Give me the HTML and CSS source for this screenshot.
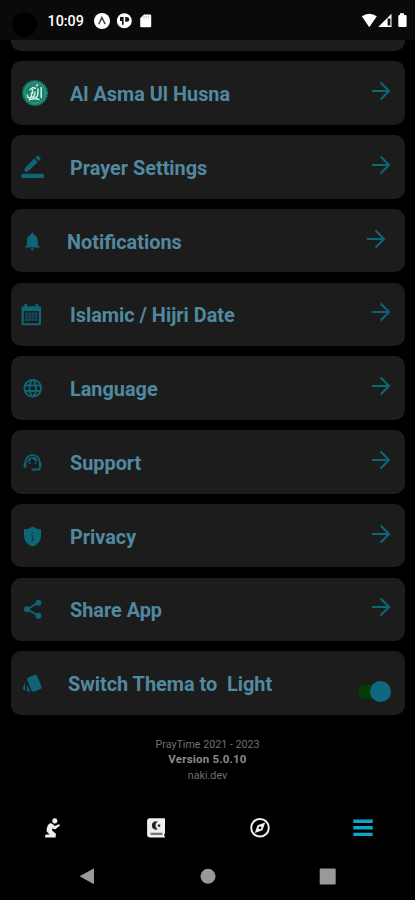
FILE: index.html
```html
<!DOCTYPE html>
<html lang="en">
<head>
<meta charset="utf-8">
<title>PrayTime</title>
<link rel="stylesheet" href="styles.css">
</head>
<body>
<svg width="0" height="0" class="defs"><symbol id="arrow" viewBox="0 0 20 20"><path d="M.8 10H17.6M9.6 1.6L18 10L9.6 18.4" fill="none" stroke="currentColor" stroke-width="2.1"/></symbol></svg>
<header class="status">
  <span class="camera"></span>
  <span class="clock">10:09</span>
  <svg class="status-left" viewBox="0 0 60 18"><circle cx="9" cy="9" r="8" fill="#fff"/><path d="M5.8 12.2L8.8 5.5L12.2 12.2M8.8 5.5L9.3 8" fill="none" stroke="#444" stroke-width="1.5"/><circle cx="31.3" cy="8.7" r="7.5" fill="#fff"/><path d="M27 5H30.6V12.8H29V9H27ZM32.2 5H34Q36.3 5.2 36.3 7.5Q36.3 9.7 33.8 9.8H32.2Z" fill="#111"/><path d="M51 2.5H57Q58.2 2.5 58.2 3.8V14Q58.2 15.3 57 15.3H48.4Q47.2 15.3 47.2 14V6.3Z" fill="#fff"/><path d="M51 4V6.3M53.2 4V6.3M55.4 4V6.3" stroke="#aaa" stroke-width=".8"/></svg>
  <svg class="status-right" viewBox="0 0 48 18"><path d="M.8 4.3Q8.3-.9 15.8 4.3L8.3 15.2Z" fill="#fff"/><path d="M17.2 15L30.5 1.8V15Z" fill="#fff"/><path d="M26.6 6.5H29.4V13.5H26.6Z" fill="#111"/><path d="M37.3 3H39V1.3H43V3H44.6Q45.6 3 45.6 4V14Q45.6 15 44.6 15H38.3Q37.3 15 37.3 14V4Q37.3 3 38.3 3Z" fill="#fff"/></svg>
</header>
<main class="list">
  <div class="card peek"></div>
  <div class="card"><svg class="icon" viewBox="0 0 32 32"><circle cx="19" cy="16" r="12.3" fill="#16806c"/><circle cx="19" cy="16" r="12.4" fill="none" stroke="#16806c" stroke-width="1.2" stroke-dasharray="1.7 1"/><circle cx="19" cy="16" r="10.3" fill="none" stroke="#4ba38e" stroke-width=".7"/><path d="M11.5 17.5Q11 21.5 14.3 20.7Q15.8 20 15.5 15.5M15.7 19.5Q18.7 22 19 14.5M19 20.5Q22.4 21.5 22 11.5M25.2 10V21M13.5 13L17 10.5L20 11.5M16.5 12V17M12.8 22.7L18 21.5L23.5 22.5M20 9L22 7.7" fill="none" stroke="#d9eee7" stroke-width="1.5"/></svg><span class="label">Al Asma Ul Husna</span><svg class="arrow"><use href="#arrow"/></svg></div>
  <div class="card"><svg class="icon" viewBox="0 0 32 32"><path d="M5.4 22.7H27.7V27H5.4ZM8.6 17.2L18.3 7.5L21.7 10.9L12 20.6H8.6ZM19.3 6.5L21 4.9Q21.7 4.3 22.4 4.9L24.3 6.8Q24.9 7.5 24.3 8.2L22.7 9.9Z"/></svg><span class="label">Prayer Settings</span><svg class="arrow"><use href="#arrow"/></svg></div>
  <div class="card inset"><svg class="icon" viewBox="0 0 32 32"><path transform="translate(5.6 5.5) scale(.9)" d="M12 22c1.1 0 2-.9 2-2h-4c0 1.1.9 2 2 2zm6-6v-5c0-3.07-1.63-5.64-4.5-6.32V4c0-.83-.67-1.5-1.5-1.5s-1.5.67-1.5 1.5v.68C7.64 5.36 6 7.92 6 11v5l-2 2v1h16v-1l-2-2z"/></svg><span class="label">Notifications</span><svg class="arrow"><use href="#arrow"/></svg></div>
  <div class="card"><svg class="icon" viewBox="0 0 32 32"><path fill-rule="evenodd" d="M7 8.3H8.4V6.8Q8.4 5.7 9.8 5.7Q11.2 5.7 11.2 6.8V8.3H19.5V6.8Q19.5 5.7 20.9 5.7Q22.3 5.7 22.3 6.8V8.3H23.5Q25 8.3 25 9.8V25.7Q25 27.3 23.5 27.3H7Q5.5 27.3 5.5 25.7V9.8Q5.5 8.3 7 8.3ZM7.8 13V25.2H22.7V13Z"/><path d="M9.3 14.5H21.3V23H9.3Z" opacity=".7"/><path d="M12.3 14V23M15.3 14V23M18.3 14V23M9 17.3H22M9 20.3H22" stroke="#1c2529" stroke-width=".7"/></svg><span class="label">Islamic / Hijri Date</span><svg class="arrow"><use href="#arrow"/></svg></div>
  <div class="card"><svg class="icon" viewBox="0 0 32 32"><path transform="translate(5.6 5.1) scale(.93)" d="M11.99 2C6.47 2 2 6.48 2 12s4.47 10 9.99 10C17.52 22 22 17.52 22 12S17.52 2 11.99 2zm6.93 6h-2.95c-.32-1.25-.78-2.45-1.38-3.56 1.84.63 3.37 1.91 4.33 3.56zM12 4.04c.83 1.2 1.48 2.53 1.91 3.96h-3.82c.43-1.43 1.08-2.76 1.91-3.96zM4.26 14C4.1 13.36 4 12.69 4 12s.1-1.36.26-2h3.38c-.08.66-.14 1.32-.14 2s.06 1.34.14 2H4.26zm.82 2h2.95c.32 1.25.78 2.45 1.38 3.56-1.84-.63-3.37-1.9-4.33-3.56zm2.95-8H5.08c.96-1.66 2.49-2.93 4.33-3.56C8.81 5.55 8.35 6.75 8.03 8zM12 19.96c-.83-1.2-1.48-2.53-1.91-3.96h3.82c-.43 1.43-1.08 2.76-1.91 3.96zM14.34 14H9.66c-.09-.66-.16-1.32-.16-2s.07-1.35.16-2h4.68c.09.65.16 1.32.16 2s-.07 1.34-.16 2zm.25 5.56c.6-1.11 1.06-2.31 1.38-3.56h2.95c-.96 1.65-2.49 2.93-4.33 3.56zM16.36 14c.08-.66.14-1.32.14-2s-.06-1.34-.14-2h3.38c.16.64.26 1.31.26 2s-.1 1.36-.26 2h-3.38z"/></svg><span class="label">Language</span><svg class="arrow"><use href="#arrow"/></svg></div>
  <div class="card"><svg class="icon" viewBox="0 0 32 32"><g transform="translate(5.8 5.5) scale(.9)"><path d="M21 12.22C21 6.73 16.74 3 12 3c-4.69 0-9 3.65-9 9.28-.6.34-1 .98-1 1.72v2c0 1.1.9 2 2 2h1v-6.1c0-3.87 3.13-7 7-7s7 3.13 7 7V19h-8v2h8c1.1 0 2-.9 2-2v-1.22c.59-.31 1-.92 1-1.64v-2.3c0-.7-.41-1.31-1-1.62z"/><circle cx="9" cy="13" r="1"/><circle cx="15" cy="13" r="1"/><path d="M18 11.03C17.52 8.18 15.04 6 12.05 6c-3.03 0-6.29 2.51-6.03 6.45 2.47-1.01 4.33-3.21 4.86-5.89 1.31 2.63 4 4.44 7.12 4.47z"/></g></svg><span class="label">Support</span><svg class="arrow"><use href="#arrow"/></svg></div>
  <div class="card"><svg class="icon" viewBox="0 0 32 32"><path d="M16.5 6.4Q20 9 25 9.3V15.5Q25 23.5 16.5 26.6Q8 23.5 8 15.5V9.3Q13 9 16.5 6.4Z"/><path d="M15.6 11.7H17.4V13.4H15.6ZM15 15.2H17.4V20H18.2V21H15V20H15.9V16.2H15Z" fill="#153c46"/></svg><span class="label">Privacy</span><svg class="arrow"><use href="#arrow"/></svg></div>
  <div class="card"><svg class="icon" viewBox="0 0 32 32"><path d="M22.5 9.8L11 16.3L22.5 22.8" fill="none" stroke="currentColor" stroke-width="1.8"/><circle cx="22.4" cy="9.7" r="3"/><circle cx="11" cy="16.3" r="3"/><circle cx="22.4" cy="22.8" r="3"/></svg><span class="label">Share App</span><svg class="arrow"><use href="#arrow"/></svg></div>
  <div class="card"><svg class="icon" viewBox="0 0 32 32"><path transform="translate(5.7 5.2) scale(.9)" d="M2.53 19.65l1.34.56v-9.03l-2.43 5.86c-.41 1.02.08 2.19 1.09 2.61zm19.5-3.7L17.07 3.98c-.31-.75-1.04-1.21-1.81-1.23-.26 0-.53.04-.79.15L7.1 5.95c-.75.31-1.21 1.03-1.23 1.8-.01.27.04.54.15.8l4.96 11.97c.31.76 1.05 1.22 1.83 1.23.26 0 .52-.05.77-.15l7.36-3.05c1.02-.42 1.51-1.59 1.09-2.6zM5.88 19.75c0 1.1.9 2 2 2h1.45l-3.45-8.34v6.34z"/></svg><span class="label theme">Switch Thema to&nbsp; Light</span><span class="switch"><span class="thumb"></span></span></div>
</main>
<footer class="about">
  <div>PrayTime 2021 - 2023</div>
  <div><b>Version 5.0.10</b></div>
  <div>naki.dev</div>
</footer>
<nav class="tabs">
  <svg viewBox="0 0 24 24"><path transform="translate(-.7 0)" d="M14.5 2.3a2.6 2.6 0 1 0 .01 0ZM9.2 7.6Q11 6.5 12.3 8L14.4 10L18.5 8.2Q20 8.2 19.5 9.8L15 13.2Q13.5 13.6 12.2 12.2L11.6 14.3L15.3 17.5Q16.2 18.6 15.2 20L15.6 21.4H4.8Q4.2 19 6 18.5H9.4L6.8 16Q6 14.8 6.5 12.4Q7.2 8.8 9.2 7.6Z"/></svg>
  <svg viewBox="0 0 24 24"><path d="M5.8 2.2H20.2Q21 2.2 21 3V17.2L20.3 18.2V20.2L21 20.4V21.4H6.3Q3.1 21.2 3.1 18.4V5Q3.1 2.2 5.8 2.2Z"/><path d="M6.5 16.7H18.5V19H6.5Z" fill="#777"/><path d="M13.8 5.6A4.2 4.2 0 1 0 13.8 13.2A4.4 4.4 0 0 1 13.8 5.6ZM15 7.6L15.5 8.8L16.8 9L15.9 9.9L16.1 11.2L15 10.6L13.8 11.1L14.1 9.8L13.2 8.9L14.5 8.8Z" fill="#222"/></svg>
  <svg viewBox="0 0 24 24"><circle cx="12" cy="11.8" r="8.8" fill="none" stroke="#eee" stroke-width="2"/><path fill-rule="evenodd" d="M17.2 6.6L14.5 14.3L6.8 17L9.5 9.3ZM12 10.4A1.4 1.4 0 1 0 12 13.2A1.4 1.4 0 1 0 12 10.4Z"/></svg>
  <svg viewBox="0 0 24 24" class="active"><path d="M2.3 3.5H21.7V6.9H2.3ZM2.3 10.1H21.7V13.5H2.3ZM2.3 16.7H21.7V20.1H2.3Z"/></svg>
</nav>
<div class="system">
  <svg viewBox="0 0 20 20"><path d="M2.6 10.2L17 2.2V18.2Z"/></svg>
  <svg viewBox="0 0 20 20"><circle cx="10" cy="10.2" r="7.5"/></svg>
  <svg viewBox="0 0 20 20"><rect x="1.7" y="2.4" width="16" height="16" rx="1"/></svg>
</div>
</body>
</html>
```
FILE: styles.css
```css
* { box-sizing: border-box; }
body { margin: 0; width: 415px; height: 900px; overflow: hidden; background: #000; font-family: Roboto, "Liberation Sans", sans-serif; display: flex; flex-direction: column; }
svg { display: block; flex: none; }
.defs { position: absolute; }
.status { height: 40px; flex: none; background: #0a0a0a; display: flex; align-items: center; padding: 0 6px 0 12px; color: #fff; }
.camera { width: 25px; height: 25px; border-radius: 50%; background: #000; margin-top: 9px; }
.clock { font-size: 14.3px; font-weight: 500; line-height: 18px; margin: 1px 0 0 10.5px; width: 46px; }
.status-left { width: 60px; height: 18px; margin: 1px 0 0 -.5px; }
.status-right { width: 48px; height: 18px; margin: 1px 0 0 auto; }
.list { flex: none; padding: 0 10px 0 11px; display: flex; flex-direction: column; gap: 10.25px; }
.card { height: 63.5px; border-radius: 10px; background: #1c1c1c; display: flex; align-items: center; padding: 0 14px 0 5px; color: #0f6578; }
.peek { height: 11px; border-radius: 0 0 10px 10px; }
.icon { width: 32px; height: 32px; fill: currentColor; }
.label { margin-left: 22px; font-weight: 700; font-size: 19.85px; line-height: 24px; padding-top: 4px; color: #5189a0; white-space: nowrap; }
.arrow { width: 20px; height: 20px; margin: 0 0 4px auto; }
.inset { padding-right: 19px; }
.inset .label { margin-left: 19px; }
.label.theme { margin-left: 20px; }
.switch { width: 34px; height: 22px; margin: 17px 0 0 auto; display: grid; align-items: center; }
.switch::before { content: ""; grid-area: 1 / 1; width: 28px; height: 14px; margin-left: 1px; border-radius: 7px; background: #043b08; }
.thumb { grid-area: 1 / 1; justify-self: end; width: 21px; height: 21px; border-radius: 50%; background: #0f6880; }
.about { margin-top: 22px; flex: none; text-align: center; color: #707070; font-size: 10.7px; line-height: 15.5px; }
.about b { color: #8a8a8a; font-size: 11.5px; letter-spacing: .2px; }
.tabs { height: 24px; margin-top: 32.5px; padding-left: 1px; flex: none; display: grid; grid-template-columns: repeat(4, 1fr); justify-items: center; fill: #eee; }
.tabs svg { width: 24px; height: 24px; }
.tabs .active { fill: #12a4c8; }
.system { margin-top: 26px; padding: 0 77px; display: flex; justify-content: space-between; fill: #999; }
.system svg { width: 20px; height: 20px; }
```
